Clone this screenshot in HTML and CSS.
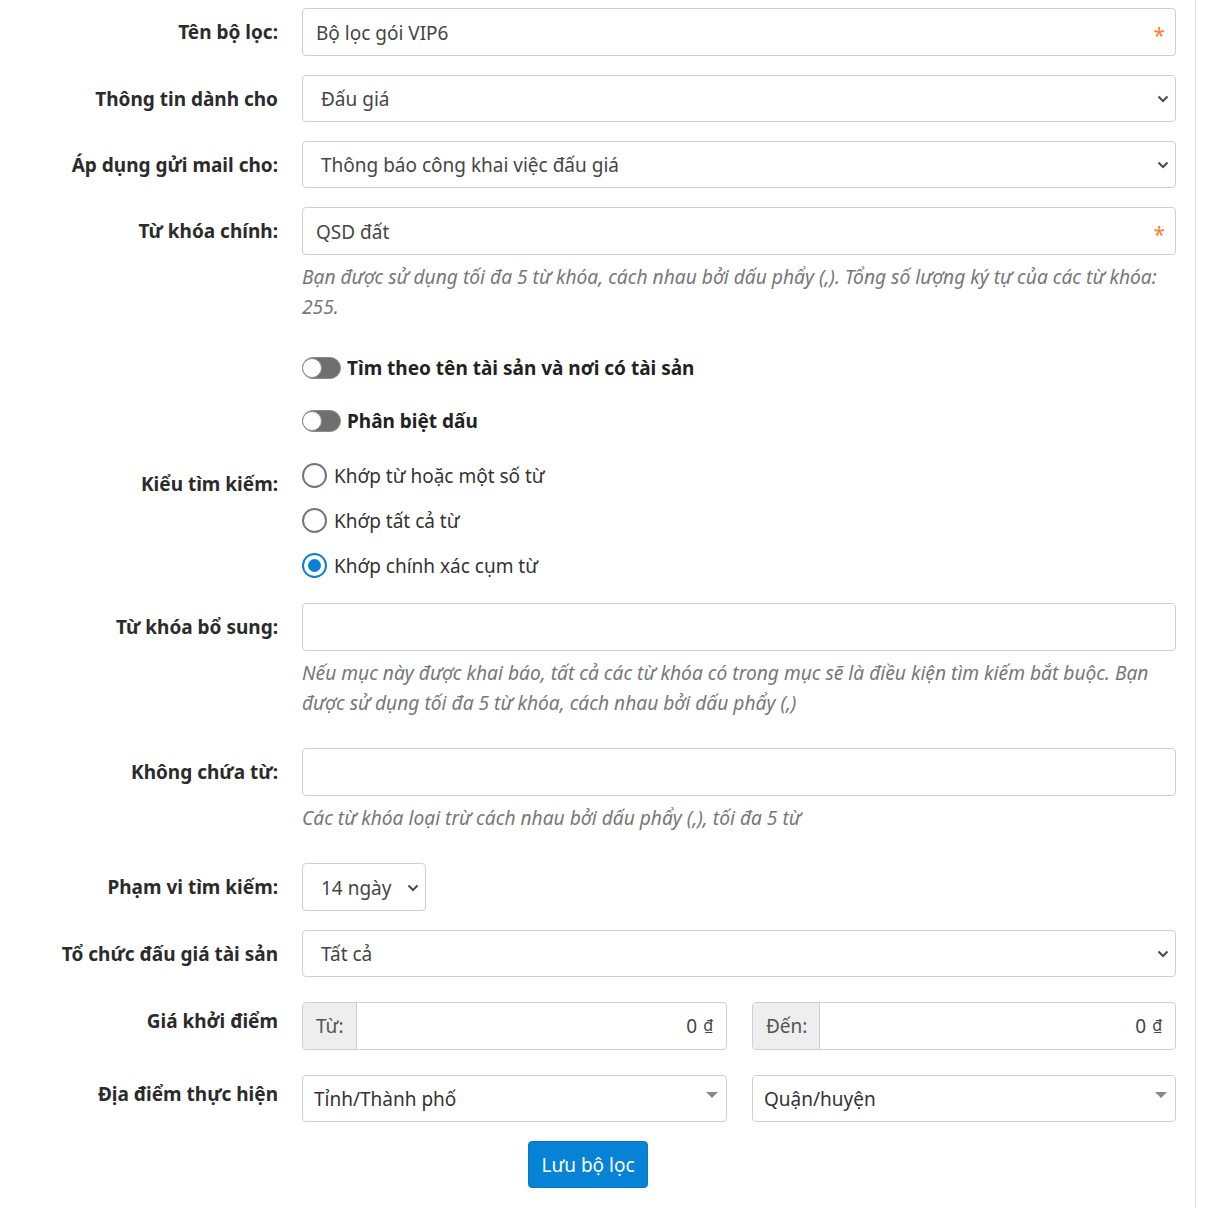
FILE: index.html
```html
<!DOCTYPE html>
<html lang="vi">
<head>
<meta charset="utf-8">
<title>Bộ lọc</title>
<link rel="stylesheet" href="styles.css">
</head>
<body>
<div class="page">
  <form class="filter-form">
    <div class="form-row">
      <label class="form-label">Tên bộ lọc:</label>
      <div class="form-field">
        <div class="control"><span class="value">Bộ lọc gói VIP6</span><span class="req">*</span></div>
      </div>
    </div>

    <div class="form-row">
      <label class="form-label">Thông tin dành cho</label>
      <div class="form-field">
        <div class="control select"><span class="value">Đấu giá</span>
          <svg class="chev" width="12" height="8" viewBox="0 0 12 8"><path d="M1.5 1.5 L6 6 L10.5 1.5" fill="none" stroke="#4a4a4a" stroke-width="2"/></svg>
        </div>
      </div>
    </div>

    <div class="form-row">
      <label class="form-label">Áp dụng gửi mail cho:</label>
      <div class="form-field">
        <div class="control select"><span class="value">Thông báo công khai việc đấu giá</span>
          <svg class="chev" width="12" height="8" viewBox="0 0 12 8"><path d="M1.5 1.5 L6 6 L10.5 1.5" fill="none" stroke="#4a4a4a" stroke-width="2"/></svg>
        </div>
      </div>
    </div>

    <div class="form-row has-help">
      <label class="form-label">Từ khóa chính:</label>
      <div class="form-field">
        <div class="control"><span class="value">QSD đất</span><span class="req">*</span></div>
        <p class="help">Bạn được sử dụng tối đa 5 từ khóa, cách nhau bởi dấu phẩy (,). Tổng số lượng ký tự của các từ khóa: 255.</p>
      </div>
    </div>

    <div class="form-row switch-row">
      <div class="form-label"></div>
      <div class="form-field switch-field">
        <span class="switch"><span class="knob"></span></span>
        <span class="switch-text">Tìm theo tên tài sản và nơi có tài sản</span>
      </div>
    </div>

    <div class="form-row switch-row last-switch">
      <div class="form-label"></div>
      <div class="form-field switch-field">
        <span class="switch"><span class="knob"></span></span>
        <span class="switch-text">Phân biệt dấu</span>
      </div>
    </div>

    <div class="form-row radio-row">
      <label class="form-label radio-label">Kiểu tìm kiếm:</label>
      <div class="form-field radios">
        <div class="radio"><span class="circle"></span><span>Khớp từ hoặc một số từ</span></div>
        <div class="radio"><span class="circle"></span><span>Khớp tất cả từ</span></div>
        <div class="radio"><span class="circle checked"></span><span>Khớp chính xác cụm từ</span></div>
      </div>
    </div>

    <div class="form-row has-help">
      <label class="form-label">Từ khóa bổ sung:</label>
      <div class="form-field">
        <div class="control"><span class="value"></span></div>
        <p class="help">Nếu mục này được khai báo, tất cả các từ khóa có trong mục sẽ là điều kiện tìm kiếm bắt buộc. Bạn được sử dụng tối đa 5 từ khóa, cách nhau bởi dấu phẩy (,)</p>
      </div>
    </div>

    <div class="form-row has-help">
      <label class="form-label">Không chứa từ:</label>
      <div class="form-field">
        <div class="control"><span class="value"></span></div>
        <p class="help">Các từ khóa loại trừ cách nhau bởi dấu phẩy (,), tối đa 5 từ</p>
      </div>
    </div>

    <div class="form-row">
      <label class="form-label">Phạm vi tìm kiếm:</label>
      <div class="form-field">
        <div class="control select small-select"><span class="value">14 ngày</span>
          <svg class="chev" width="12" height="8" viewBox="0 0 12 8"><path d="M1.5 1.5 L6 6 L10.5 1.5" fill="none" stroke="#4a4a4a" stroke-width="2"/></svg>
        </div>
      </div>
    </div>

    <div class="form-row row-gap-lg">
      <label class="form-label">Tổ chức đấu giá tài sản</label>
      <div class="form-field">
        <div class="control select"><span class="value">Tất cả</span>
          <svg class="chev" width="12" height="8" viewBox="0 0 12 8"><path d="M1.5 1.5 L6 6 L10.5 1.5" fill="none" stroke="#4a4a4a" stroke-width="2"/></svg>
        </div>
      </div>
    </div>

    <div class="form-row row-gap-lg">
      <label class="form-label high-label">Giá khởi điểm</label>
      <div class="form-field two-col">
        <div class="input-group">
          <span class="addon">Từ:</span>
          <span class="group-input">0 <span class="dong">₫</span></span>
        </div>
        <div class="input-group">
          <span class="addon">Đến:</span>
          <span class="group-input">0 <span class="dong">₫</span></span>
        </div>
      </div>
    </div>

    <div class="form-row">
      <label class="form-label high-label">Địa điểm thực hiện</label>
      <div class="form-field two-col">
        <div class="control s2"><span class="value">Tỉnh/Thành phố</span>
          <svg class="tri" width="12" height="6" viewBox="0 0 12 6"><path d="M0 0 H12 L6 6 Z" fill="#888"/></svg>
        </div>
        <div class="control s2"><span class="value">Quận/huyện</span>
          <svg class="tri" width="12" height="6" viewBox="0 0 12 6"><path d="M0 0 H12 L6 6 Z" fill="#888"/></svg>
        </div>
      </div>
    </div>

    <div class="actions">
      <button type="button" class="btn-save">Lưu bộ lọc</button>
    </div>
  </form>
</div>
</body>
</html>
```

FILE: styles.css
```css
* { box-sizing: border-box; }

html, body {
  margin: 0;
  padding: 0;
  background: #fff;
}

body {
  font-family: "Noto Sans", "Open Sans", "DejaVu Sans", sans-serif;
  font-size: 19px;
  color: #333;
}

.page {
  width: 1196px;
  min-height: 1208px;
  border-right: 1px solid #e2e2e2;
  padding-top: 8px;
}

.filter-form {
  width: 1176px;
}

.form-row {
  display: grid;
  grid-template-columns: 278px 874px;
  column-gap: 24px;
  margin-bottom: 19px;
}

.form-label {
  text-align: right;
  font-weight: 700;
  color: #2b2b2b;
  line-height: 30px;
  padding-top: 9px;
  white-space: nowrap;
}

.form-field {
  min-width: 0;
}

.control {
  height: 48px;
  border: 1px solid #cfcfcf;
  border-radius: 4px;
  display: flex;
  align-items: center;
  justify-content: space-between;
  padding: 1px 13px 0 13px;
  color: #454545;
  background: #fff;
}

.control.select {
  height: 47px;
  padding-left: 18px;
  padding-right: 6px;
}

.control.small-select {
  width: 124px;
  height: 48px;
}

.req {
  color: #ff7f27;
  font-size: 21px;
  line-height: 1;
  padding-top: 6px;
  margin-right: -3px;
}

.chev {
  display: block;
  flex: none;
}

.has-help {
  margin-bottom: 30px;
}

.help {
  margin: 7px 0 0 0;
  font-style: italic;
  color: #777;
  line-height: 30px;
  font-size: 19.2px;
}

.switch-row {
  margin-bottom: 21px;
}

.switch-row.last-switch {
  margin-bottom: 16px;
}

.switch-field {
  display: flex;
  align-items: center;
  height: 32px;
  gap: 6px;
}

.switch {
  width: 39px;
  height: 22px;
  border-radius: 11px;
  background: #6f6f6f;
  border: 1px solid #8a8a8a;
  display: flex;
  align-items: center;
  flex: none;
}

.knob {
  width: 20px;
  height: 20px;
  border-radius: 50%;
  background: #fff;
  border: 1px solid #8c8c8c;
  margin-left: -1px;
}

.switch-text {
  font-weight: 700;
  color: #222;
}

.radio-row {
  margin-bottom: 15px;
}

.radio-label {
  padding-top: 16px;
}

.radios {
  display: flex;
  flex-direction: column;
}

.radio {
  height: 45px;
  display: flex;
  align-items: center;
  gap: 7px;
  color: #333;
}

.circle {
  width: 25px;
  height: 25px;
  border-radius: 50%;
  border: 2px solid #757575;
  background: #fff;
  flex: none;
  display: flex;
  align-items: center;
  justify-content: center;
}

.circle.checked {
  border-color: #0a7fd6;
}

.circle.checked::after {
  content: "";
  width: 13px;
  height: 13px;
  border-radius: 50%;
  background: #0a7fd6;
}

.row-gap-lg {
  margin-bottom: 25px;
}

.high-label {
  padding-top: 4px;
}

.two-col {
  display: grid;
  grid-template-columns: 425px 424px;
  column-gap: 25px;
}

.input-group {
  height: 48px;
  display: flex;
  border: 1px solid #cfcfcf;
  border-radius: 4px;
  overflow: hidden;
}

.addon {
  background: #eeeeee;
  border-right: 1px solid #cfcfcf;
  color: #555;
  display: flex;
  align-items: center;
  padding: 0 12px 0 13px;
}

.group-input {
  flex: 1;
  display: flex;
  align-items: center;
  justify-content: flex-end;
  padding-right: 13px;
  color: #454545;
  gap: 6px;
}

.dong {
  font-size: 16px;
  text-decoration: underline;
  text-underline-offset: 2px;
  padding-bottom: 3px;
}

.control.s2 {
  height: 47px;
  padding-left: 11px;
  padding-right: 8px;
  align-items: center;
  color: #333;
}

.tri {
  display: block;
  margin-top: -9px;
}

.actions {
  display: flex;
  justify-content: center;
}

.btn-save {
  width: 120px;
  height: 47px;
  background: #0683d6;
  border: 1px solid #0678c6;
  border-radius: 4px;
  color: #fff;
  font-family: inherit;
  font-size: 19px;
  padding: 0;
}
```
